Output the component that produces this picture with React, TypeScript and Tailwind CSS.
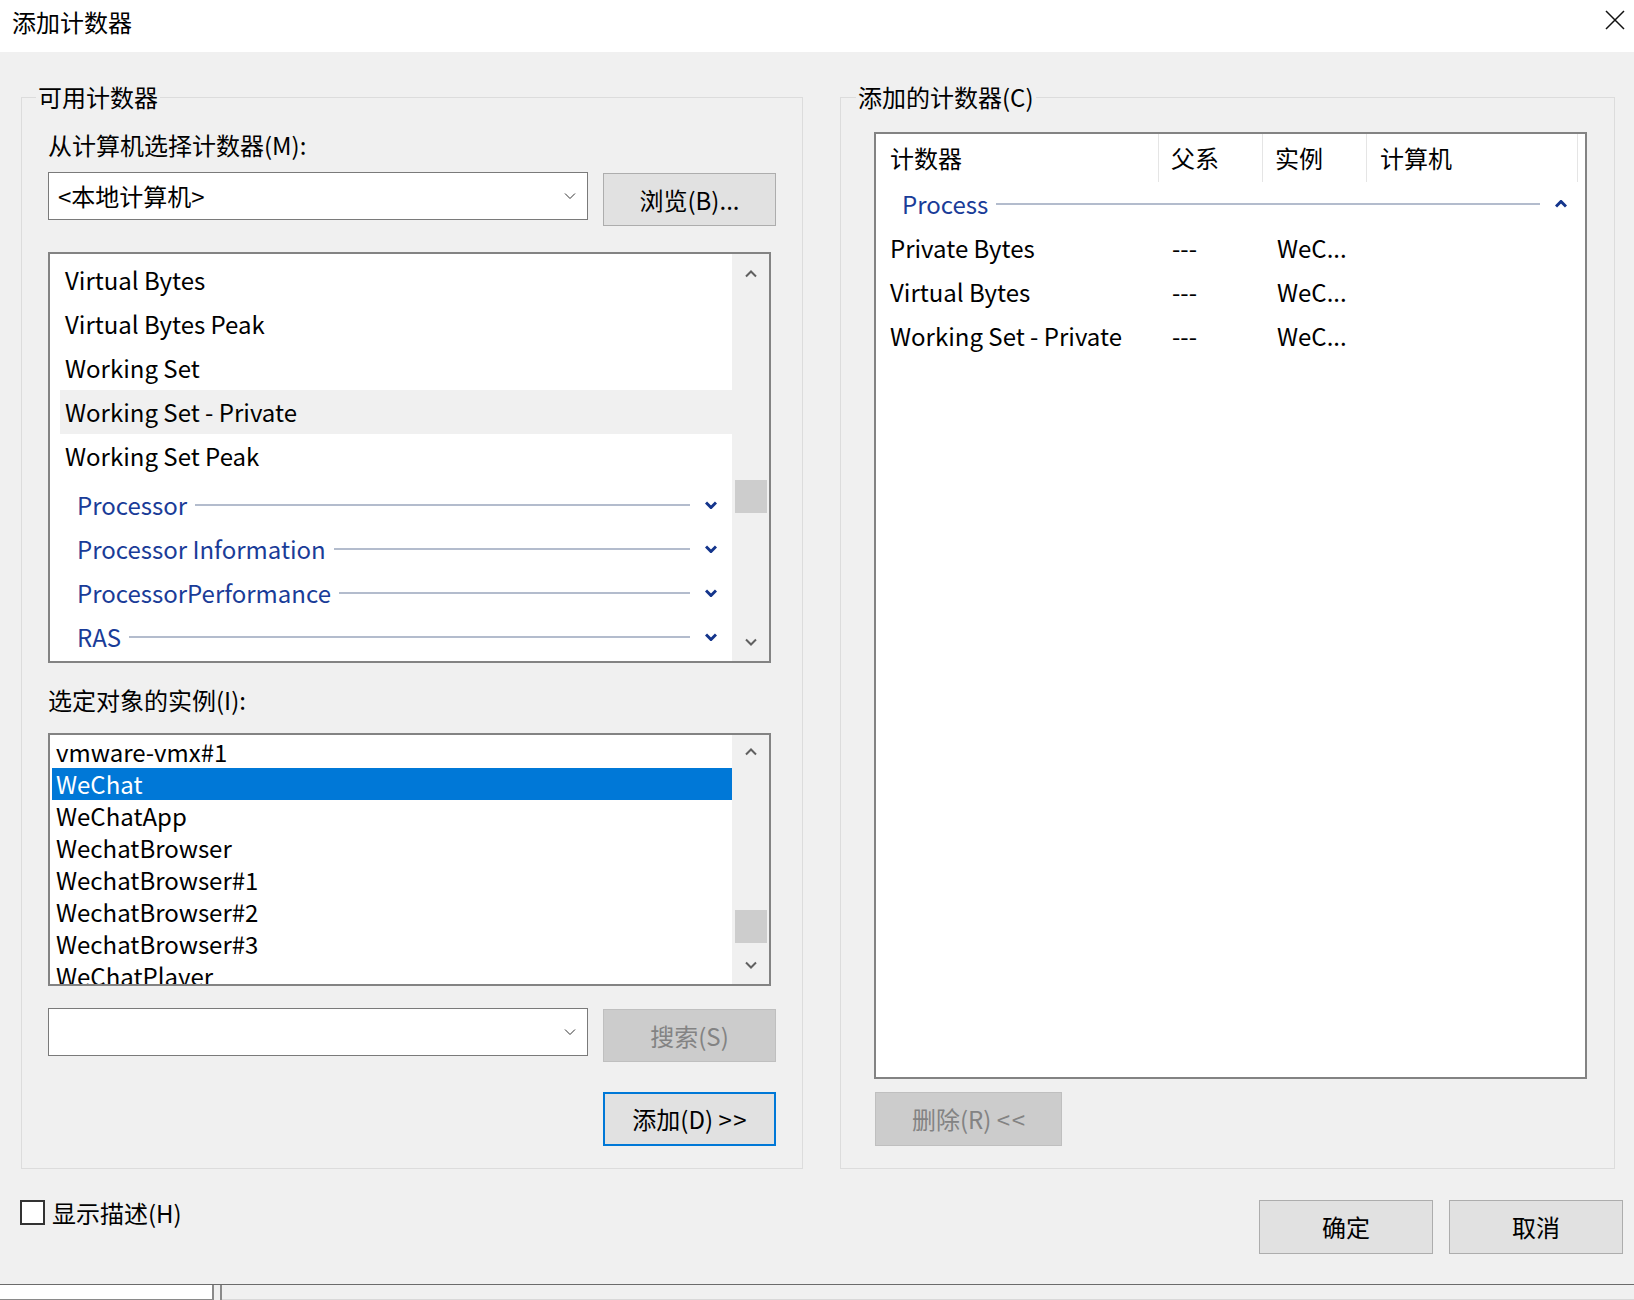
import type { ReactNode } from 'react';
import clsx from 'clsx';

const counters = ['Virtual Bytes', 'Virtual Bytes Peak', 'Working Set', 'Working Set - Private', 'Working Set Peak'];
const objects = ['Processor', 'Processor Information', 'ProcessorPerformance', 'RAS'];
const instances = [
  'vmware-vmx#1',
  'WeChat',
  'WeChatApp',
  'WechatBrowser',
  'WechatBrowser#1',
  'WechatBrowser#2',
  'WechatBrowser#3',
  'WeChatPlayer',
];
const added = ['Private Bytes', 'Virtual Bytes', 'Working Set - Private'];

// ── Small glyphs ─────────────────────────────────────────────────────────

function Caret({ up = false, weight = 1, className }: { up?: boolean; weight?: number; className?: string }) {
  return (
    <svg width="12" height="8" viewBox="0 0 12 8" className={className}>
      <path
        d={up ? 'M1 6.5 L6 1.5 L11 6.5' : 'M1 1.5 L6 6.5 L11 1.5'}
        fill="none"
        stroke="currentColor"
        strokeWidth={weight}
      />
    </svg>
  );
}

function Combo({ value }: { value?: string }) {
  return (
    <div className="flex h-[48px] w-[540px] items-center justify-between border border-[#7a7a7a] bg-white pl-[9px] pr-[11px]">
      <span className="text-[24px] leading-none">{value}</span>
      <Caret className="text-[#333]" />
    </div>
  );
}

function Button({
  children,
  variant = 'normal',
  className,
}: {
  children: ReactNode;
  variant?: 'normal' | 'disabled' | 'default';
  className?: string;
}) {
  return (
    <button
      type="button"
      className={clsx(
        'flex items-center justify-center text-[24px] leading-none',
        variant === 'normal' && 'border border-[#adadad] bg-[#e1e1e1] text-black',
        variant === 'default' && 'border-2 border-[#0078d7] bg-[#e1e1e1] text-black',
        variant === 'disabled' && 'border border-[#bfbfbf] bg-[#cccccc] text-[#838383]',
        className,
      )}
    >
      {children}
    </button>
  );
}

function ScrollBar({ top, thumb, bottom }: { top: string; thumb: string; bottom: string }) {
  return (
    <div className="flex w-[37px] shrink-0 flex-col items-center bg-[#f0f0f0]">
      <div className={clsx('flex w-full items-center justify-center text-[#606060]', top)}>
        <Caret up weight={2} />
      </div>
      <div className={clsx('h-[33px] w-[32px] bg-[#cdcdcd]', thumb)} />
      <div className="flex-1" />
      <div className={clsx('flex w-full items-center justify-center text-[#606060]', bottom)}>
        <Caret weight={2} />
      </div>
    </div>
  );
}

function GroupHeader({ name, up = false, className }: { name: string; up?: boolean; className?: string }) {
  return (
    <div className={clsx('flex h-[44px] items-center', className)}>
      <span className="text-[24px] leading-none text-[#1a3c98]">{name}</span>
      <div className="ml-[8px] h-[2px] flex-1 bg-[#b3bccd]" />
      <Caret up={up} weight={3} className="ml-[15px] text-[#14358c]" />
    </div>
  );
}

// ── Dialog ───────────────────────────────────────────────────────────────

export default function App() {
  return (
    <div className="flex h-[1300px] w-[1634px] flex-col overflow-hidden bg-[#f0f0f0] font-['Noto_Sans_CJK_SC','Noto_Sans',sans-serif] text-black">
      {/* Title bar */}
      <div className="flex h-[52px] shrink-0 items-start justify-between bg-white pl-[12px] pr-[9px]">
        <span className="pt-[6px] text-[24px] leading-[32px]">添加计数器</span>
        <svg width="20" height="20" viewBox="0 0 20 20" className="mt-[10px]">
          <path d="M1 1 L19 19 M19 1 L1 19" stroke="#111" strokeWidth="1.5" />
        </svg>
      </div>

      {/* Group boxes */}
      <div className="flex gap-[37px] pl-[21px] pt-[29px]">
        {/* Available counters */}
        <fieldset className="h-[1088px] w-[782px] border border-[#dcdcdc] p-0">
          <legend className="ml-[14px] px-[2px] text-[24px] leading-[32px]">可用计数器</legend>

          <div className="px-[26px]">
            <div className="mt-[16px] text-[24px] leading-[32px]">从计算机选择计数器(M):</div>
            <div className="mt-[11px] flex items-start gap-[15px]">
              <Combo value="<本地计算机>" />
              <Button className="mt-[1px] h-[53px] w-[173px]">浏览(B)...</Button>
            </div>

            {/* Counter list */}
            <div className="mt-[26px] flex h-[411px] w-[723px] border-2 border-[#838383] bg-white">
              <div className="flex-1 overflow-hidden pt-[4px]">
                {counters.map((c) => (
                  <div
                    key={c}
                    className={clsx(
                      'ml-[10px] flex h-[44px] items-center pl-[5px] text-[24px] leading-none',
                      c === 'Working Set - Private' && 'bg-[#f0f0f0]',
                    )}
                  >
                    {c}
                  </div>
                ))}
                <div className="mt-[5px] pl-[27px] pr-[15px]">
                  {objects.map((o) => (
                    <GroupHeader key={o} name={o} />
                  ))}
                </div>
              </div>
              <ScrollBar top="h-[40px]" thumb="mt-[186px]" bottom="h-[38px]" />
            </div>

            <div className="mt-[21px] text-[24px] leading-[32px]">选定对象的实例(I):</div>

            {/* Instance list */}
            <div className="mt-[17px] flex h-[253px] w-[723px] border-2 border-[#838383] bg-white">
              <div className="flex-1 overflow-hidden pt-[1px]">
                {instances.map((i) => (
                  <div
                    key={i}
                    className={clsx(
                      'ml-[2px] flex h-[32px] items-center pl-[4px] text-[24px] leading-none',
                      i === 'WeChat' && 'bg-[#0078d7] text-white',
                    )}
                  >
                    {i}
                  </div>
                ))}
              </div>
              <ScrollBar top="h-[34px]" thumb="mt-[141px]" bottom="h-[38px]" />
            </div>

            <div className="mt-[22px] flex items-start gap-[15px]">
              <Combo />
              <Button variant="disabled" className="mt-[1px] h-[53px] w-[173px]">
                搜索(S)
              </Button>
            </div>

            <div className="mt-[30px] flex justify-end">
              <Button variant="default" className="h-[54px] w-[173px]">
                添加(D) &gt;&#8202;&gt;
              </Button>
            </div>
          </div>
        </fieldset>

        {/* Added counters */}
        <fieldset className="h-[1088px] w-[775px] border border-[#dcdcdc] p-0">
          <legend className="ml-[15px] px-[2px] text-[24px] leading-[32px]">添加的计数器(C)</legend>

          <div className="pl-[33px]">
            <div className="mt-[19px] h-[947px] w-[713px] border-2 border-[#838383] bg-white">
              <div className="grid h-[48px] grid-cols-[283px_104px_104px_211px] text-[24px] leading-none">
                <div className="flex items-center border-r border-[#e5e5e5] pl-[14px]">计数器</div>
                <div className="flex items-center border-r border-[#e5e5e5] pl-[12px]">父系</div>
                <div className="flex items-center border-r border-[#e5e5e5] pl-[12px]">实例</div>
                <div className="flex items-center border-r border-[#e5e5e5] pl-[13px]">计算机</div>
              </div>
              <GroupHeader name="Process" up className="pl-[26px] pr-[18px]" />
              {added.map((a) => (
                <div key={a} className="grid h-[44px] grid-cols-[283px_104px_104px] items-center text-[24px] leading-none">
                  <span className="pl-[14px]">{a}</span>
                  <span className="pl-[13px]">---</span>
                  <span className="pl-[14px]">WeC...</span>
                </div>
              ))}
            </div>

            <Button variant="disabled" className="ml-[1px] mt-[13px] h-[54px] w-[187px]">
              删除(R) &lt;&#8202;&lt;
            </Button>
          </div>
        </fieldset>
      </div>

      {/* Footer */}
      <div className="mt-[31px] flex items-start justify-between pl-[20px] pr-[11px]">
        <label className="flex items-center">
          <span className="h-[25px] w-[25px] border-2 border-[#333] bg-white" />
          <span className="ml-[7px] text-[24px] leading-[25px]">显示描述(H)</span>
        </label>
        <div className="flex gap-[16px]">
          <Button className="h-[54px] w-[174px]">确定</Button>
          <Button className="h-[54px] w-[174px]">取消</Button>
        </div>
      </div>

      {/* Edge of the window beneath */}
      <div className="mt-auto flex h-[16px] shrink-0 border-t border-[#6b6b6b]">
        <div className="w-[214px] border-b border-r-2 border-[#8a8a8a] bg-white" />
        <div className="ml-[6px] w-[2px] bg-[#8a8a8a]" />
        <div className="flex-1 border-b border-[#d8d8d8]" />
      </div>
    </div>
  );
}
